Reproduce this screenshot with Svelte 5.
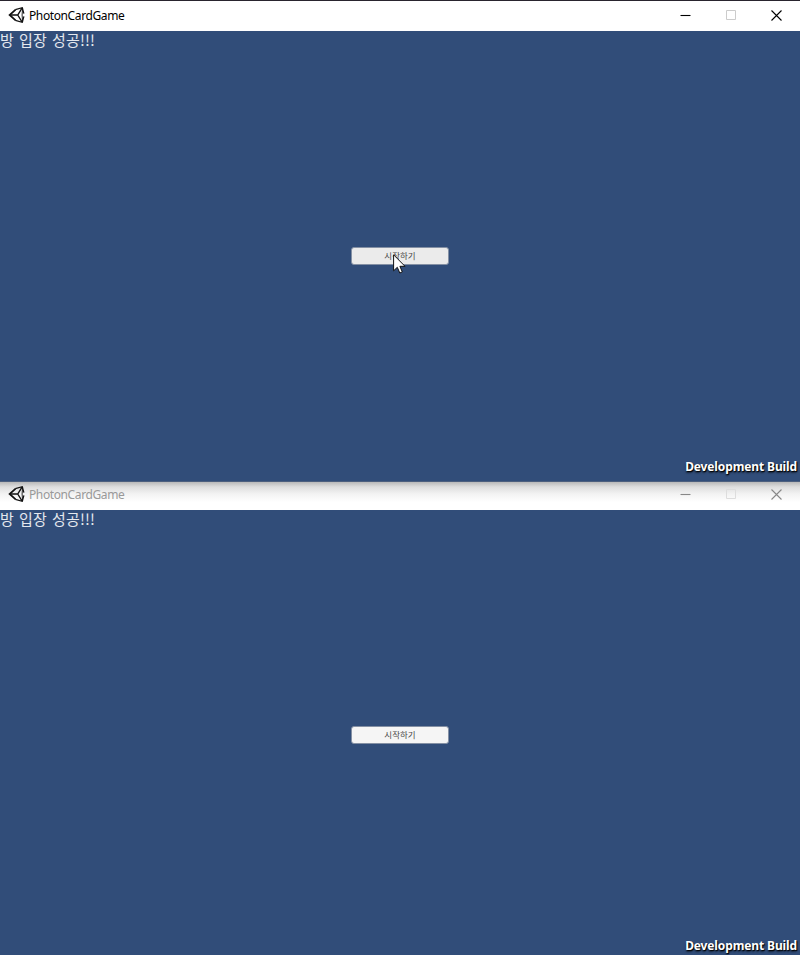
<script>
  const windows = [
    { id: 'front', active: true },
    { id: 'back', active: false }
  ];
</script>

<main>
  {#each windows as win (win.id)}
    <section class="window" class:inactive={!win.active}>
      <header>
        <svg class="logo" width="18" height="18" viewBox="0 0 18 18" fill="none" stroke="#111">
          <path d="M7.6 3.7L1.6 9L7.6 14.3" stroke-width="1.7" />
          <path d="M7.3 3.6L14.3 1.7L15.9 7.6M15.9 10.4L14.3 16.3L7.3 14.4" stroke-width="1.25" />
          <path d="M2 9H9.7L14 2.2M9.7 9L14 15.8" stroke-width="1.4" />
          <path d="M14.6 2.2Q13.6 9 14.6 15.8" stroke-width="0.9" />
        </svg>
        <span class="title">PhotonCardGame</span>
        <div class="controls">
          <svg width="11" height="11" viewBox="0 0 11 11"><path d="M0.5 5.5H10.5" /></svg>
          <svg class="disabled" width="11" height="11" viewBox="0 0 11 11"><path d="M.5 .5H9.5V9.5H.5Z" /></svg>
          <svg width="11" height="11" viewBox="0 0 11 11"><path d="M.5 .5L10.5 10.5M10.5 .5L.5 10.5" /></svg>
        </div>
      </header>
      <div class="game">
        <p class="status">방 입장 성공!!!</p>
        <button>시작하기</button>
        <span class="build">Development Build</span>
      </div>
    </section>
  {/each}
  <svg class="cursor" width="13" height="20" viewBox="0 0 13 20">
    <path d="M.6 .8V16.8L4.3 13.3L6.8 19L9.3 17.9L6.9 12.3H12Z" fill="#fff" stroke="#111" stroke-width="1" />
  </svg>
</main>

<style>
  :global(body) { margin: 0; }
  main {
    position: relative;
    width: 800px;
    height: 955px;
    overflow: hidden;
    background: #314d79;
    font-family: "Noto Sans", "Noto Sans CJK KR", sans-serif;
  }
  .window { box-sizing: border-box; height: 482px; border-top: 1px solid #29242e; border-bottom: 1px solid #4c5f7e; }
  header {
    display: flex;
    align-items: center;
    box-sizing: border-box;
    height: 30px;
    padding: 0 18px 0 8px;
    background: #fff;
  }
  .logo { flex: none; margin-top: -2px; }
  .title {
    margin-left: 3px;
    font: 12px/16px "Noto Sans", sans-serif;
    letter-spacing: -0.39px;
    color: #000;
    white-space: nowrap;
  }
  .controls { display: flex; gap: 34px; margin: -1px 0 0 auto; }
  .controls svg { display: block; }
  .controls .disabled { margin-left: 1px; }
  .controls path { fill: none; stroke: #000; stroke-width: 1.1; }
  .controls .disabled path { stroke: #ccc; stroke-width: 1; }
  .game {
    position: relative;
    display: flex;
    flex-direction: column;
    align-items: center;
    height: 450px;
    background: #314d79;
  }
  .status {
    align-self: flex-start;
    margin: 0;
    height: 18px;
    font: 15px/18px "Noto Sans CJK KR", sans-serif;
    word-spacing: 1.6px;
    letter-spacing: 0.15px;
    color: #e4e8ee;
    white-space: nowrap;
  }
  button {
    margin: 198px 0 0;
    padding: 0 0 1px;
    width: 98px;
    height: 18px;
    border: 1px solid #8490a4;
    border-radius: 3px;
    background: #ebebeb;
    color: #484848;
    font: 8.5px/13px "Noto Sans CJK KR", sans-serif;
  }
  .build {
    align-self: flex-end;
    margin: auto 3px 5px 0;
    font: 700 12px/18px "Noto Sans", sans-serif;
    letter-spacing: -0.12px;
    color: #fff;
    text-shadow: 1px 1px 1px #000, 0 2px 2px #0008;
    white-space: nowrap;
  }
  .inactive { height: 478px; border: 0; }
  .inactive header {
    height: 28px;
    padding-bottom: 4px;
    background: linear-gradient(#b9b9b9, #dedede 5px, #f3f3f3 12px, #fff 20px);
  }
  .inactive .logo, .inactive .controls { margin-top: 0; }
  .inactive .title { margin-top: 1px; color: #999; }
  .inactive .controls path { stroke: #888; }
  .inactive .controls .disabled path { stroke: #ddd; }
  .inactive .game { height: 450px; }
  .inactive button { background: #f5f5f5; }
  .cursor { position: absolute; left: 393px; top: 254px; }
</style>
